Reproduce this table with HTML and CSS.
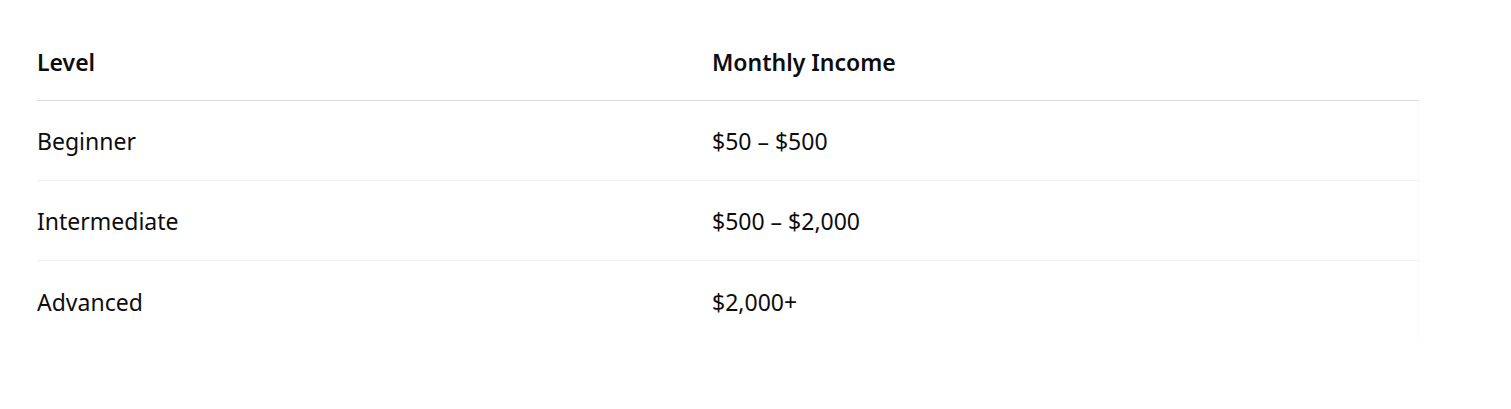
FILE: index.html
```html
<!DOCTYPE html>
<html>
<head>
<meta charset="utf-8">
<link rel="stylesheet" href="styles.css">
</head>
<body>
<div class="table">
  <div class="row head">
    <div class="cell">Level</div>
    <div class="cell">Monthly Income</div>
  </div>
  <div class="row">
    <div class="cell">Beginner</div>
    <div class="cell">$50 – $500</div>
  </div>
  <div class="row">
    <div class="cell">Intermediate</div>
    <div class="cell">$500 – $2,000</div>
  </div>
  <div class="row last">
    <div class="cell">Advanced</div>
    <div class="cell">$2,000+</div>
  </div>
</div>
</body>
</html>
```
FILE: styles.css
```css
html, body {
  margin: 0;
  background: #ffffff;
}
body {
  padding: 24px 0 0 37px;
  font-family: "Noto Sans", "Open Sans", sans-serif;
  color: #0d0d0d;
}
.table {
  width: 1382px;
  display: flex;
  flex-direction: column;
}
.row {
  box-sizing: border-box;
  display: grid;
  grid-template-columns: 675px 1fr;
  height: 80px;
  align-items: center;
  border-bottom: 1px solid #f0f0f0;
  border-right: 1px solid #fafafa;
  font-size: 23px;
}
.row.head {
  height: 77px;
  font-weight: 600;
  border-bottom: 1px solid #d9d9d9;
  border-right: none;
}
.row.last {
  border-bottom: none;
}
.cell {
  line-height: 1.3;
  padding-top: 3px;
}
.head .cell {
  padding-top: 2px;
}
```
